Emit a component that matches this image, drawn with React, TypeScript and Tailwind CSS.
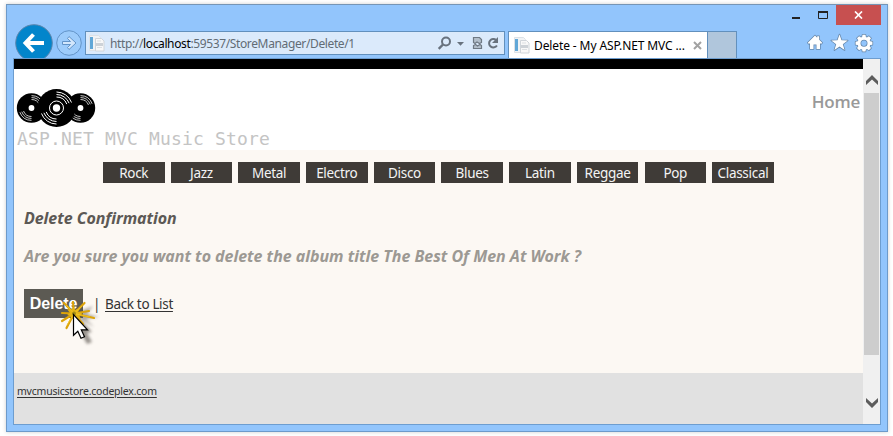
import React from "react";

const genres: string[] = [
  "Rock",
  "Jazz",
  "Metal",
  "Electro",
  "Disco",
  "Blues",
  "Latin",
  "Reggae",
  "Pop",
  "Classical",
];

function BackButton() {
  return (
    <svg className="block shrink-0" width="39" height="34" viewBox="14 24 39 34">
      <circle cx="34" cy="43" r="18.3" fill="#0285cb" stroke="#5b86ae" strokeWidth="1" />
      <path d="M44 43H26M33.5 34.5L25.5 43l8 8.5" fill="none" stroke="#fff" strokeWidth="4" />
    </svg>
  );
}

function ForwardButton() {
  return (
    <svg className="block shrink-0" width="32" height="34" viewBox="53 24 32 34">
      <circle cx="69" cy="43" r="12.3" fill="#9dccfb" stroke="#6394c8" strokeWidth="1" />
      <path d="M62.5 41.5h8l-3-3 1.5-2 7 6.5-7 6.5-1.5-2 3-3h-8z" fill="#d3e7fc" stroke="#6394c8" strokeWidth="1" />
    </svg>
  );
}

function PageIcon() {
  return (
    <svg className="block shrink-0" width="16" height="17" viewBox="0 0 16 17">
      <path d="M.5.5h9l2 2v13H.5z" fill="#f1f3f5" stroke="#dce1e6" />
      <path d="M1 2h3v12H1z" fill="#61a7d7" />
      <path d="M6.5 3.500h6l2.500 2.500v10H6.500z" fill="#f8f8f8" stroke="#d0d5da" />
      <path d="M8 6h4M8 12.500h5" stroke="#dcdfe2" />
      <path d="M7 8h7v3H7z" fill="#cdd2d7" />
    </svg>
  );
}

function AddressIcons() {
  return (
    <svg className="block shrink-0" width="68" height="22" viewBox="436 32 68 22">
      <circle cx="446" cy="41.500" r="4" fill="none" stroke="#68727e" strokeWidth="2" />
      <path d="M443 44.500l-4.300 4.300" stroke="#68727e" strokeWidth="2.400" />
      <path d="M457 42h7l-3.500 3.800z" fill="#68727e" />
      <path
        d="M473.500 42.500v-5h6l2 2v3l-2 1-2.500-1.500-2 1.500zM473.500 48.500v-3l2-1 2 1.500 2.500-1.500 1.500 1v3z"
        fill="#b3bfcb"
        stroke="#6f7984"
        strokeWidth="1.200"
      />
      <path d="M496.200 40.200a4.200 4.200 0 1 0 .7 5.200" fill="none" stroke="#68727e" strokeWidth="2" />
      <path d="M498 37v6h-6z" fill="#68727e" />
    </svg>
  );
}

function ToolIcons() {
  return (
    <svg className="block" width="68" height="20" viewBox="806 33 68 20">
      <g fill="#fff" stroke="#6587aa" strokeWidth="1.500" paintOrder="stroke" strokeLinejoin="round">
        <path d="M815 35.500l2.200 2.200v-1.500h2v3.500l3 3-1.200 1.200-1-1V49h-3.500v-4.500h-3V49H810v-6.100l-1 1-1.200-1.200z" />
        <path d="M839.500 34.500l2 5.800 6.200.1-4.900 3.800 1.800 5.900-5.100-3.500-5.100 3.500 1.800-5.900-4.900-3.800 6.200-.1z" />
        <path fillRule="evenodd" d="M862.500 34.800h3l.4 2.200 1.100.5 1.900-1.300 2.100 2.100-1.300 1.900.5 1.100 2.200.4v3l-2.200.4-.5 1.100 1.300 1.900-2.100 2.100-1.900-1.300-1.100.5-.4 2.200h-3l-.4-2.200-1.100-.5-1.900 1.300-2.100-2.100 1.300-1.900-.5-1.100-2.200-.4v-3l2.200-.4.500-1.100-1.300-1.900 2.100-2.100 1.900 1.300 1.100-.5zM864 39.700a3.500 3.500 0 1 0 0 7 3.500 3.500 0 0 0 0-7z" />
      </g>
    </svg>
  );
}

function WindowControls() {
  return (
    <div className="flex items-start">
      <svg className="block" width="46" height="20" viewBox="790 5 46 20">
        <path d="M792 17h8v2h-8z" fill="#222" />
        <path d="M818.500 12.500h9v6h-9z" fill="none" stroke="#222" />
        <path d="M818 11h10v2h-10z" fill="#222" />
      </svg>
      <div className="flex h-5 w-[45px] items-center justify-center bg-[#c75050]">
        <svg width="9" height="8" viewBox="0 0 9 8">
          <path d="M1 .5l7 7M8 .5l-7 7" stroke="#fff" strokeWidth="1.700" />
        </svg>
      </div>
    </div>
  );
}

function Record({ cx, cy, r }: { cx: number; cy: number; r: number }) {
  const s = r / 19;
  return (
    <g transform={`translate(${cx} ${cy}) scale(${s})`}>
      <circle r="19" fill="#000" />
      <g fill="none" stroke="#fff" strokeWidth="1">
        <path d="M0-16A16 16 0 0 1 15-5.500M0-13.500A13.500 13.500 0 0 1 12.600-4.800M0-11A11 11 0 0 1 10.300-3.900" />
        <path d="M0 16A16 16 0 0 1-15 5.500M0 13.500A13.500 13.500 0 0 1-12.600 4.800M0 11A11 11 0 0 1-10.300 3.900" />
      </g>
    </g>
  );
}

function Logo() {
  return (
    <svg className="block" width="80" height="40" viewBox="16 88 80 40">
      <Record cx={31.5} cy={108} r={14.7} />
      <Record cx={80.5} cy={108} r={14.7} />
      <Record cx={56.5} cy={108} r={19} />
      <circle cx="31.500" cy="108" r="2.900" fill="#fff" />
      <circle cx="80.500" cy="108" r="2.900" fill="#fff" />
      <circle cx="56.500" cy="108" r="7" fill="none" stroke="#fff" />
      <circle cx="56.500" cy="108" r="3.700" fill="#fff" />
    </svg>
  );
}

function ClickPointer() {
  return (
    <svg className="absolute left-[36px] top-[9px]" width="56" height="52" viewBox="60 298 56 52">
      <defs>
        <filter id="soft" x="-40%" y="-40%" width="180%" height="180%">
          <feGaussianBlur stdDeviation="1.600" />
        </filter>
      </defs>
      <path d="M79 318l13 14-5 1 5 9-5 2-5-9-1 2z" fill="#55504a" opacity=".6" filter="url(#soft)" />
      <path d="M78 312l15-6-6 8 12 3-13 2 8 8-14-8z" fill="#55504a" opacity=".45" filter="url(#soft)" />
      <g fill="none" stroke="#dca30a" strokeWidth="2.200" strokeLinecap="round">
        <path d="M74 313.500L64 303M74 313.500L73 302M74 313.500L84.500 303M74 313.500L89 311M74 313.500L94 318M74 313.500L83 324M74 313.500L66.500 328M74 313.500L62 321M74 313.500L62 313" />
      </g>
      <path d="M67 309l4 1 2-3 2 3 5-2-2 4 5 1-4 2 2 4-6-2-4 3v-4l-4-1 3-2z" fill="#e5b315" />
      <path d="M74 313.500L66 305M74 313.500L82 306M74 313.500L90 317M74 313.500L67 325" stroke="#f3c928" strokeWidth=".8" />
      <circle cx="74" cy="313.500" r="2" fill="#a28a12" />
      <path d="M73.500 314.500v20.800l4.300-4 3.200 7 3.500-1.500-3.200-7h6.200z" fill="#fff" stroke="#000" strokeWidth="1.200" />
    </svg>
  );
}

function BrowserHeader() {
  return (
    <header className="flex h-[53px] shrink-0 items-end justify-between pl-[7px]">
      <div className="flex items-end">
        <BackButton />
        <ForwardButton />
        <div className="mb-[3px] mr-[3px] flex h-6 w-[420px] items-center border border-[#6290bd] bg-[#dbeafb] pl-[3px]">
          <PageIcon />
          <div className="ml-[5px] mt-[2px] flex-1 whitespace-nowrap font-['Noto_Sans','Open_Sans',sans-serif] text-[12px] leading-[16px] tracking-[-0.370px] text-[#626c75]">
            http://<span className="text-black">localhost</span>:59537/StoreManager/Delete/1
          </div>
          <AddressIcons />
        </div>
        <div className="flex h-[27px] w-[200px] items-center border border-b-0 border-[#6290bd] bg-white pl-[5px]">
          <PageIcon />
          <span className="ml-[4px] mt-[2px] w-[159px] whitespace-nowrap font-['Noto_Sans','Open_Sans',sans-serif] text-[12px] leading-[16px] tracking-[-0.110px] text-black">
            Delete - My ASP.NET MVC ...
          </span>
          <svg width="9" height="9" viewBox="0 0 9 9">
            <path d="M1 1l7 7M8 1L1 8" stroke="#a2a2a2" strokeWidth="2" />
          </svg>
        </div>
        <div className="h-[27px] w-[29px] border border-b-0 border-l-0 border-[#6290bd] bg-[#b0c6dc]" />
      </div>
      <div className="mr-1.5 flex h-full flex-col items-end justify-between">
        <WindowControls />
        <div className="mb-[5px] mr-[7px]">
          <ToolIcons />
        </div>
      </div>
    </header>
  );
}

function Scrollbar() {
  return (
    <div className="flex w-[17px] shrink-0 flex-col items-center bg-[#f0f0f0]">
      <div className="flex h-[34px] items-center pt-2">
        <svg width="12" height="10" viewBox="0 0 12 10">
          <path d="M0 6l6-6 6 6v4L6 4.500 0 10z" fill="#5c5c5c" />
        </svg>
      </div>
      <div className="h-[262px] w-[15px] bg-[#cdcdcd]" />
      <svg className="mt-[43px]" width="12" height="10" viewBox="0 0 12 10">
        <path d="M0 4l6 6 6-6V0L6 5.500 0 0z" fill="#5c5c5c" />
      </svg>
    </div>
  );
}

export default function App() {
  return (
    <div className="h-[436px] w-[893px] overflow-hidden bg-white pl-1.5 pt-1">
      <div className="flex h-[428px] w-[882px] flex-col border border-[#6d9aca] border-t-[#7695b5] bg-[#92c5fc] shadow-[0_0_4px_rgba(0,0,0,0.2)]">
        <BrowserHeader />
        <div className="ml-1.5 flex h-[367px] w-[868px] border border-[#6d9dcf]">
          <div className="flex min-w-0 flex-1 flex-col bg-white">
            <div className="h-2.5 shrink-0 bg-black" />
            <div className="flex h-[81px] shrink-0 items-start justify-between pl-0.5 pr-[3px]">
              <div className="pt-[19px]">
                <Logo />
                <h1 className="ml-px whitespace-nowrap font-['DejaVu_Sans_Mono',monospace] text-[18px] leading-[22px] tracking-[0.160px] text-[#c4c4c4]">
                  ASP.NET MVC Music Store
                </h1>
              </div>
              <a className="pt-[21px] font-['Open_Sans','Noto_Sans',sans-serif] text-[17px] font-semibold leading-[24px] tracking-[-0.250px] text-[#999]">
                Home
              </a>
            </div>
            <main className="flex h-[223px] shrink-0 flex-col bg-[#fcf8f3] pl-2.5 pt-3">
              <nav className="ml-[79px] flex gap-[6.200px]">
                {genres.map((genre) => (
                  <a
                    key={genre}
                    className="flex h-[21px] w-[61.500px] shrink-0 items-center justify-center whitespace-nowrap bg-[#3f3b37] pt-[2px] font-['Noto_Sans','Open_Sans',sans-serif] text-[13.500px] leading-[19px] tracking-[-0.300px] text-[#f4f4f4]"
                  >
                    {genre}
                  </a>
                ))}
              </nav>
              <h2 className="mt-[25px] whitespace-nowrap font-['Noto_Sans','Open_Sans',sans-serif] text-[16px] font-bold italic leading-[20px] tracking-[-0.060px] text-[#5c5955]">
                Delete Confirmation
              </h2>
              <p className="mt-[18px] whitespace-nowrap font-['Noto_Sans','Open_Sans',sans-serif] text-[16px] font-bold italic leading-[20px] tracking-[-0.030px] text-[#9c9993]">
                Are you sure you want to delete the album title The Best Of Men At Work ?
              </p>
              <div className="relative mt-[23px] flex h-[29px] items-center">
                <button className="h-[29px] w-[59px] bg-[#5c5a53] font-['Liberation_Sans',Arial,sans-serif] text-[16px] font-bold leading-[29px] tracking-[-0.100px] text-white">
                  Delete
                </button>
                <span className="ml-[10px] w-[12px] font-['Noto_Sans',sans-serif] text-[13.500px] leading-[20px] text-[#333]">|</span>
                <a className="whitespace-nowrap font-['Noto_Sans','Open_Sans',sans-serif] text-[13.500px] leading-[20px] tracking-[-0.340px] text-[#333] underline underline-offset-2">
                  Back to List
                </a>
                <ClickPointer />
              </div>
            </main>
            <footer className="flex-1 bg-[#e1e1e1] pl-[3px] pt-[10px]">
              <a className="block whitespace-nowrap font-['Noto_Sans','Open_Sans',sans-serif] text-[10.500px] leading-[16px] tracking-[-0.220px] text-[#333] underline underline-offset-2">
                mvcmusicstore.codeplex.com
              </a>
            </footer>
          </div>
          <Scrollbar />
        </div>
      </div>
    </div>
  );
}
